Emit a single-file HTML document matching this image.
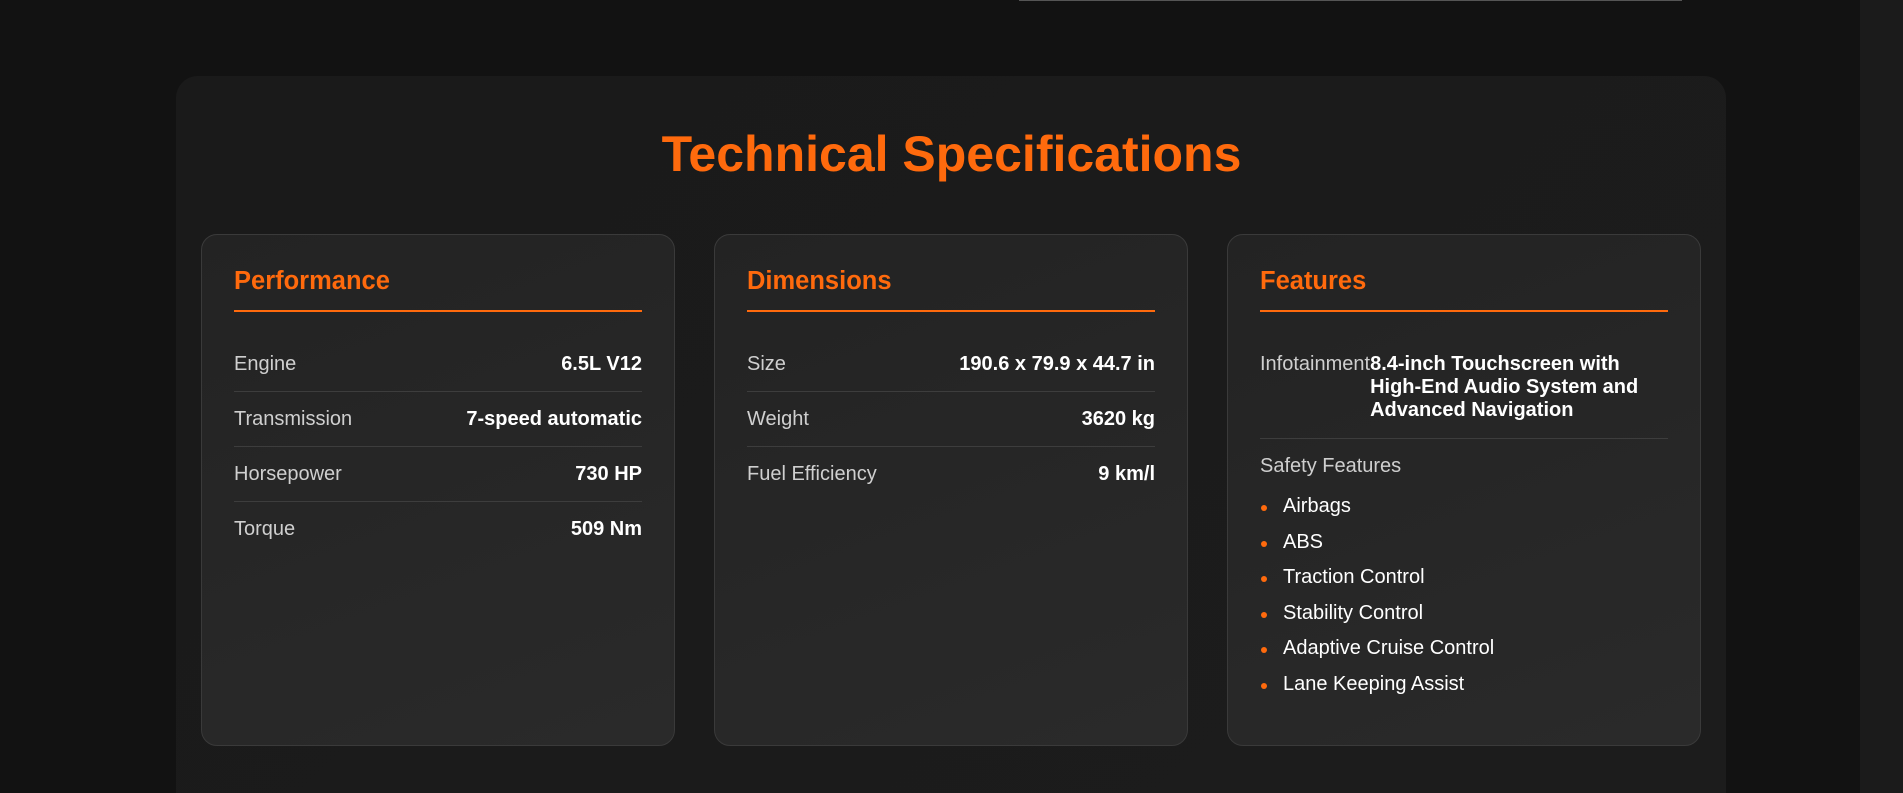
<!DOCTYPE html>
<html><head><meta charset="utf-8"><style>
*{box-sizing:border-box;margin:0;padding:0}
html,body{width:1903px;height:793px;overflow:hidden;background:#121212;font-family:"Liberation Sans",sans-serif;position:relative}
.strip{position:absolute;left:1860px;top:0;width:43px;height:793px;background:#1b1b1b}
.topline{position:absolute;left:1019px;top:0;width:663px;height:1px;background:#555}
.panel{position:absolute;left:176px;top:76px;width:1550px;height:717px;background:linear-gradient(135deg,#1a1a1a,#1c1c1c);border-radius:22px 22px 0 0}
h1{position:absolute;left:0;width:100%;top:125px;text-align:center;color:#ff6a0d;font-size:50px;font-weight:bold}
.card{position:absolute;top:234px;width:474px;height:512px;border:1px solid #3a3a3a;border-radius:16px;background:linear-gradient(160deg,#232323,#2a2a2a);padding:0 32px}
.card h2{color:#ff6a0d;font-size:25.5px;font-weight:bold;margin-top:32px;height:45px;border-bottom:2px solid #ff6a0d}
.rows{margin-top:25px}
.row{display:flex;justify-content:space-between;align-items:flex-start;padding:16px 0;border-bottom:1px solid #3d3d3d;font-size:20px;line-height:22px}
.row:last-child{border-bottom:none}
.l{color:#cfcfcf}
.v{color:#fff;font-weight:bold;text-align:right}
.inf .v{text-align:left;flex:1;line-height:23px}
ul{list-style:none;margin-top:8px}
li{position:relative;color:#fff;font-size:20px;line-height:35.5px;padding-left:23px}
li:before{content:"";position:absolute;left:1px;top:16px;width:6px;height:6px;border-radius:50%;background:#ff6a0d}
</style></head><body>
<div class="strip"></div>
<div class="topline"></div>
<div class="panel"></div>
<h1>Technical Specifications</h1>
<div class="card" style="left:201px">
<h2>Performance</h2>
<div class="rows">
<div class="row"><span class="l">Engine</span><span class="v">6.5L V12</span></div>
<div class="row"><span class="l">Transmission</span><span class="v">7-speed automatic</span></div>
<div class="row"><span class="l">Horsepower</span><span class="v">730 HP</span></div>
<div class="row"><span class="l">Torque</span><span class="v">509 Nm</span></div>
</div></div>
<div class="card" style="left:714px">
<h2>Dimensions</h2>
<div class="rows">
<div class="row"><span class="l">Size</span><span class="v">190.6 x 79.9 x 44.7 in</span></div>
<div class="row"><span class="l">Weight</span><span class="v">3620 kg</span></div>
<div class="row"><span class="l">Fuel Efficiency</span><span class="v">9 km/l</span></div>
</div></div>
<div class="card" style="left:1227px">
<h2>Features</h2>
<div class="rows">
<div class="row inf"><span class="l">Infotainment</span><span class="v">8.4-inch Touchscreen with High-End Audio System and Advanced Navigation</span></div>
<div class="row" style="border:none;padding-bottom:4px"><span class="l">Safety Features</span></div>
</div>
<ul><li>Airbags</li><li>ABS</li><li>Traction Control</li><li>Stability Control</li><li>Adaptive Cruise Control</li><li>Lane Keeping Assist</li></ul>
</div>
</body></html>
